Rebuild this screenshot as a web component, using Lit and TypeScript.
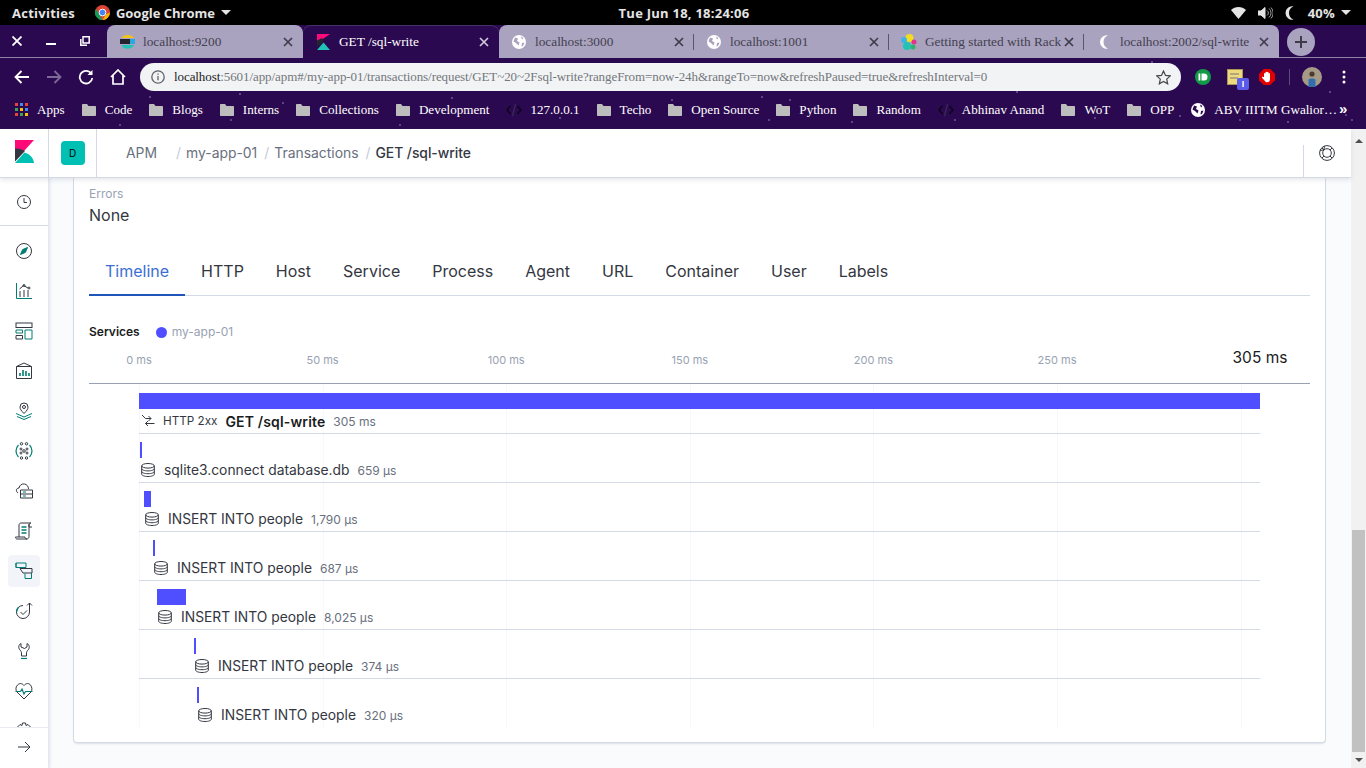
import { LitElement, html, css, svg } from "lit";
import { customElement } from "lit/decorators.js";

const D = "#343741";
const T = "#017d73";

const navIcon = (body: unknown) =>
  html`<svg class="nav-svg" viewBox="0 0 18 18" width="18" height="18" fill="none" stroke="${D}" stroke-width="1">${body}</svg>`;

const navItems = [
  svg`<circle cx="9" cy="9" r="6.5"/><path d="M9 5v4.5h3"/>`,
  svg`<circle cx="9" cy="9" r="7.5"/><path d="M12.5 5.5L10.4 10.4 5.5 12.5 7.6 7.6z" fill="${T}" stroke="${T}"/>`,
  svg`<path d="M1.5 1v15.5h15.5" stroke="${T}"/><path d="M5 15V9M9 15V8M13 15V8M4.5 7L8.5 3.5 13 6" /><circle cx="9" cy="3.5" r="1"/><circle cx="14" cy="6" r="1"/>`,
  svg`<rect x="1" y="1" width="16" height="4.5"/><path d="M1 13.5h6.5V17H1z"/><path d="M10 8h7v9h-7z" stroke="${T}"/><path d="M1 8h6.5v3H1z" stroke="${T}"/>`,
  svg`<path d="M1.5 4.5h15v12h-15zM1.5 4.5L9 1l7.5 3.5"/><path d="M5 14v-3M8 14V8M11 14v-5M14 14v-3" stroke="${T}" stroke-width="1.6"/>`,
  svg`<path d="M9 11.5C6 8.5 5 7 5 5a4 4 0 0 1 8 0c0 2-1 3.5-4 6.5z"/><circle cx="9" cy="5" r="1.5"/><path d="M1 11.5l8 3.5 8-3.5M2 14.5l7 3 7-3" stroke="${T}"/>`,
  svg`<circle cx="6.5" cy="1.8" r="1.2"/><circle cx="11.5" cy="1.8" r="1.2"/><circle cx="9" cy="9" r="1.3"/><circle cx="6.5" cy="16" r="1.2"/><circle cx="11.5" cy="16" r="1.2"/><circle cx="6" cy="7" r="1"/><circle cx="12" cy="7" r="1"/><circle cx="6" cy="11" r="1"/><circle cx="12" cy="11" r="1"/><path d="M3.5 3C1.5 5 1 7 1 9s.5 4 2.5 6M14.5 3C16.5 5 17 7 17 9s-.5 4-2.5 6" stroke="${T}" stroke-width="1.2"/>`,
  svg`<path d="M3 11C.5 9.5 1 6 4 6c.5-3 3-4.500 5.500-4s4 2.500 4 5"/><path d="M5.500 8h12v8h-12zM5.500 12h12"/><path d="M8 10h3M8 14h3" stroke="${T}"/>`,
  svg`<path d="M4 15V3c0-1 1-2 2-2h10c-1 0-2 1-2 2v11.500c0 1.500-1 2.500-2 2.500H2c-1 0-1.500-1-1.500-2H10c0 1 .5 2 2 2"/><path d="M6.500 5h5M6.500 8h5M6.500 11h5" stroke="${T}" stroke-width="1.3"/><path d="M14 2v3h3"/>`,
  svg`<path d="M1 1h10v4.500H1z" fill="none" stroke="${T}"/><path d="M5 6.500h12v4.500H8z" stroke="${D}"/><path d="M10 11.500v5h6.500V11" stroke="${T}"/><path d="M1 1v4.500" stroke="${T}"/>`,
  svg`<path d="M8 3.500A6.500 6.500 0 1 0 14.500 10V1M12 3.500L14.500 1 17 3.500"/><path d="M5.500 10l2.500 2.500 4-4"/><path d="M1.500 10a6.500 6.500 0 0 1 2-4.700" stroke="${T}" stroke-width="1.300"/>`,
  svg`<path d="M6 1.500C3.500 2.500 3 6 5 8c1 1 1.500 2 1.500 3v3h5v-3c0-1 .5-2 1.500-3 2-2 1.500-5.500-1-6.500V5L9.500 6.500 6 5z"/><path d="M6 16.500h6" stroke="${T}" stroke-width="1.200"/>`,
  svg`<path d="M2 10C.5 8 .5 5 2.500 3S7 1 9 3.500C11 1 14 1 15.500 3s2 5 .5 7L9 17z"/><path d="M.5 9.500h5l1.500-2.500 2 5 1.500-2.500h7" stroke="${T}" stroke-width="1.200"/>`,
  svg`<circle cx="9" cy="9" r="2.500"/><path d="M7.500 1h3l.5 2.500 2-1 2.500 2.500-1 2 2.500.5v3l-2.500.5 1 2-2.500 2.500-2-1-.5 2.500h-3l-.5-2.500-2 1L2.500 13l1-2L1 10.500v-3l2.500-.5-1-2L5 2.500l2 1z"/>`,
];

const kibanaLogo = html`<svg width="19" height="23" viewBox="0 0 19 23"><path d="M0 0h19L0 21z" fill="#ff0a78"/><path d="M0 23l9.500-10.500C15 14 18.500 18 19 23z" fill="#00bfb3"/><path d="M0 8.500v13L10 11C7 9 3.500 8.300 0 8.500z" fill="#343741"/></svg>`;

const folder = html`<svg width="14" height="12" viewBox="0 0 14 12"><path d="M0 1c0-.6.4-1 1-1h4l1.500 2H13c.6 0 1 .4 1 1v8c0 .6-.4 1-1 1H1c-.6 0-1-.4-1-1z" fill="#bdbdbd"/></svg>`;
const code = html`<svg width="16" height="12" viewBox="0 0 16 12" fill="none" stroke="#0d0419" stroke-width="1.500"><path d="M4.500 2L1 6l3.500 4M11.500 2L15 6l-3.500 4"/><path d="M9.500 0L6.500 12" stroke="#3a2558"/></svg>`;
const globe = (size: number, fg: string, bg: string) => html`<svg width="${size}" height="${size}" viewBox="0 0 14 14"><circle cx="7" cy="7" r="7" fill="${fg}"/><path d="M3 2.500l3 1-1 2.500 2.500 1.500-1 3L4 8 1.500 6.500zM9 1.500l2.500 1.500-1.500 1.500zM10 8l2.500-.500-1.500 3.500-1.500.5z" fill="${bg}"/></svg>`;
const close = (c: string) => html`<svg class="tab-x" width="10" height="10" viewBox="0 0 10 10" stroke="${c}" stroke-width="1.700"><path d="M1 1l8 8M9 1l-8 8"/></svg>`;

const crescent = "M8.500 .5A6.640 6.640 0 1 0 8.500 13.500 6.940 6.940 0 0 1 8.500 .5z";

const elasticIcon = html`<svg width="15" height="16" viewBox="0 0 15 16"><path d="M1.500 4C3 0 12 0 14 4z" fill="#f0c419"/><rect x="0" y="5" width="10" height="5" fill="#24242c"/><rect x="10" y="5" width="5" height="5" fill="#27a9e1"/><path d="M1.500 11h12.500C12 16 3 16 1.500 11z" fill="#1fc4b5"/></svg>`;
const kibanaTab = html`<svg width="13" height="16" viewBox="0 0 13 16"><path d="M0 0h13L0 9z" fill="#ff0a78"/><path d="M0 6.500L5 4 6.500 7.500 0 13z" fill="#24242c"/><path d="M0 16l6.500-7.500L13 16z" fill="#1fc4b5"/></svg>`;
const rancherIcon = html`<svg width="16" height="16" viewBox="0 0 16 16"><circle cx="8.500" cy="4" r="4" fill="#f4dc20"/><circle cx="3" cy="6" r="3" fill="#3ab4e8"/><circle cx="13" cy="8" r="2.500" fill="#e0358b"/><circle cx="6" cy="12" r="4" fill="#1fc4b5"/><circle cx="12" cy="13" r="2.500" fill="#2fb56a"/></svg>`;
const moonTab = html`<svg width="10" height="14" viewBox="0 0 9 14"><path d="${crescent}" fill="#fff"/></svg>`;

const tabs = [
  { t: "localhost:9200", i: elasticIcon, w: 196 },
  { t: "GET /sql-write", i: kibanaTab, w: 196, active: true },
  { t: "localhost:3000", i: globe(14, "#fff", "#a8a2bd"), w: 195 },
  { t: "localhost:1001", i: globe(14, "#fff", "#a8a2bd"), w: 195 },
  { t: "Getting started with Rack", i: rancherIcon, w: 195 },
  { t: "localhost:2002/sql-write", i: moonTab, w: 195 },
];

const bookmarks = [
  ["folder", "Code"], ["folder", "Blogs"], ["folder", "Interns"], ["folder", "Collections"],
  ["folder", "Development"], ["code", "127.0.0.1"], ["folder", "Techo"], ["folder", "Open Source"],
  ["folder", "Python"], ["folder", "Random"], ["code", "Abhinav Anand"], ["folder", "WoT"],
  ["folder", "OPP"], ["globe", "ABV IIITM Gwalior\u2026"],
];

const stars = [
  [150, 97], [283, 103], [231, 120], [452, 98], [498, 55], [492, 36], [350, 113], [560, 118],
  [583, 32], [762, 97], [790, 100], [769, 120], [852, 122], [1017, 92], [1016, 44], [955, 120],
  [1180, 116], [1288, 122], [1346, 115], [1352, 120], [1152, 62], [672, 100], [640, 115], [1095, 118],
  [1040, 113], [1240, 120], [400, 125], [120, 125], [240, 94], [1330, 92],
];

const ticks = [
  ["0 ms", 0], ["50 ms", 50], ["100 ms", 100], ["150 ms", 150], ["200 ms", 200], ["250 ms", 250],
] as [string, number][];

const rows = [
  { name: "sqlite3.connect database.db", d: "659 \u00b5s", off: 1, w: 2, icon: 2 },
  { name: "INSERT INTO people", d: "1,790 \u00b5s", off: 5, w: 7, icon: 6 },
  { name: "INSERT INTO people", d: "687 \u00b5s", off: 14, w: 2, icon: 15 },
  { name: "INSERT INTO people", d: "8,025 \u00b5s", off: 18, w: 29, icon: 19 },
  { name: "INSERT INTO people", d: "374 \u00b5s", off: 55, w: 2, icon: 56 },
  { name: "INSERT INTO people", d: "320 \u00b5s", off: 58, w: 2, icon: 59 },
];

const dbIcon = html`<svg class="db" width="14" height="14" viewBox="0 0 14 14" fill="none" stroke="#343741" stroke-width="1"><ellipse cx="7" cy="2.800" rx="6.300" ry="2.300"/><path d="M.7 2.800v8.400c0 1.300 2.800 2.300 6.300 2.300s6.300-1 6.300-2.300V2.800"/><path d="M.7 5.600c0 1.300 2.800 2.300 6.300 2.300s6.300-1 6.300-2.300M.7 8.400c0 1.300 2.800 2.300 6.300 2.300s6.300-1 6.300-2.300"/></svg>`;
const httpIcon = html`<svg width="14" height="14" viewBox="0 0 14 14" fill="none" stroke="#343741" stroke-width="1"><path d="M1 1l3.500 3.500H10M7.500 2L10 4.500 7.500 7"/><path d="M13.500 9.500H4.500M7 7L4.500 9.500 7 12"/></svg>`;

@customElement("app-root")
export class AppRoot extends LitElement {
  static styles = css`
    :host { display: block; width: 1366px; height: 768px; overflow: hidden; font-family: "Inter", "Liberation Sans", sans-serif; }
    .root { width: 1366px; height: 768px; display: flex; flex-direction: column; overflow: hidden; }

    .gnome { height: 25px; flex: none; background: #000; color: #e4e4e4; display: grid; grid-template-columns: 1fr auto 1fr; align-items: center; font: 700 13px "Open Sans", "Noto Sans", sans-serif; letter-spacing: .25px; }
    .g-left { display: flex; align-items: center; padding-left: 12px; }
    .g-chrome { display: flex; align-items: center; gap: 6px; margin-left: 20px; letter-spacing: 0; }
    .caret { width: 0; height: 0; border-left: 5px solid transparent; border-right: 5px solid transparent; border-top: 5px solid #e4e4e4; margin-left: 6px; }
    .g-center { margin-left: 2px; }
    .g-right { display: flex; align-items: center; justify-content: flex-end; padding-right: 15px; }
    .g-right svg { display: block; }

    .chrome { position: relative; height: 104px; flex: none; background: #2b0950; display: flex; flex-direction: column; color: #fff; overflow: hidden; }
    .stars { position: absolute; left: 0; top: -25px; }
    .tabstrip { position: relative; height: 33px; flex: none; display: flex; border-bottom: 1px solid #8d84a8; box-sizing: border-box; }
    .win { width: 107px; flex: none; display: flex; align-items: center; padding: 0 0 0 12px; box-sizing: border-box; gap: 24px; }
    .tab { height: 33px; box-sizing: border-box; display: flex; align-items: center; flex: none; padding: 0 10px 0 12px; background: #a9a3bf; color: #43404f; font: 14px "Liberation Serif", serif; position: relative; }
    .tab.first { border-radius: 8px 8px 0 0; }
    .tab.active { background: #2b0950; color: #fff; border-radius: 8px 8px 0 0; box-shadow: inset 0 1px 0 #453068; }
    .tab.g3 { border-radius: 8px 0 0 0; }
    .tab.g6 { border-radius: 0 8px 0 0; }
    .tab.sep::after { content: ""; position: absolute; right: 0; top: 9px; height: 16px; width: 1px; background: #5a5568; }
    .tab-icon { width: 16px; display: flex; justify-content: center; flex: none; }
    .tab-title { flex: 1; margin-left: 8px; overflow: hidden; white-space: nowrap; min-width: 0; font-size: 13.3px; }
    .tab-x { flex: none; margin-left: 3px; }
    .plus { width: 28px; height: 28px; border-radius: 50%; background: #a9a3bf; margin: 3px 0 0 8px; display: flex; align-items: center; justify-content: center; flex: none; }

    .toolbar { position: relative; height: 34px; flex: none; display: flex; align-items: center; }
    .nav-btns { width: 140px; flex: none; display: flex; align-items: center; padding: 3px 0 0 14px; box-sizing: border-box; gap: 16px; }
    .omni { width: 1041px; height: 28px; flex: none; background: #f1f3f4; border-radius: 14px; display: flex; align-items: center; padding: 0 10px 0 11px; box-sizing: border-box; margin-top: 4px; }
    .url { flex: 1; margin-left: 9px; font: 13px "Liberation Serif", serif; color: #73777c; white-space: nowrap; overflow: hidden; letter-spacing: -.08px; }
    .url b { font-weight: 400; color: #202124; }
    .ext { flex: 1; display: flex; align-items: center; padding: 3px 0 0 14px; }
    .divider { width: 1px; height: 16px; background: #5d4a78; margin: 0 12px 0 14px; }
    .note { margin: 6px 9px 0 0; }

    .marks { position: relative; height: 37px; flex: none; box-sizing: border-box; padding: 0 0 2px 15px; display: flex; align-items: center; gap: 17px; font: 13.1px "Liberation Serif", serif; color: #fff; white-space: nowrap; }
    .mark { display: flex; align-items: center; gap: 9px; flex: none; }
    .mark.code { gap: 8px; }
    .more { position: absolute; left: 1339px; top: 8px; font: 700 15px "Liberation Sans", sans-serif; }

    .page { flex: 1; display: flex; min-height: 0; }
    .app { flex: 1; min-width: 0; display: flex; flex-direction: column; background: #fafbfd; }
    .scroll { width: 15px; flex: none; background: #f1f1f1; display: flex; flex-direction: column; align-items: center; }
    .up { width: 0; height: 0; border-left: 4px solid transparent; border-right: 4px solid transparent; border-bottom: 4px solid #505050; margin-top: 10px; }
    .thumb { width: 13px; height: 222px; background: #c1c1c1; margin-top: 387px; }
    .down { width: 0; height: 0; border-left: 4px solid transparent; border-right: 4px solid transparent; border-top: 4px solid #505050; margin-top: 6px; }

    .kbn-header { height: 49px; flex: none; box-sizing: border-box; background: #fff; border-bottom: 1px solid #d3dae6; box-shadow: 0 2px 4px rgba(152,162,179,.25); display: flex; align-items: center; position: relative; z-index: 2; color: #69707d; font-size: 13.9px; }
    .logo { width: 49px; height: 100%; box-sizing: border-box; border-right: 1px solid #d3dae6; flex: none; display: flex; padding: 11px 0 0 15px; }
    .space { width: 48px; height: 100%; box-sizing: border-box; border-right: 1px solid #d3dae6; flex: none; display: flex; align-items: center; justify-content: center; }
    .badge { width: 24px; height: 24px; border-radius: 4px; background: #00bfb3; color: #000; font-size: 10px; display: flex; align-items: center; justify-content: center; margin-top: -1px; }
    .crumbs { display: flex; align-items: center; margin: -1px 0 0 29px; flex: 1; }
    .crumb-sep { color: #c4cbd6; margin: 0 6px 0 0; width: 4px; }
    .crumbs span.first { margin-right: 19px; }
    .crumbs span.c { margin-right: 7px; }
    .crumbs .cur { color: #343741; font-weight: 500; letter-spacing: -.05px; }
    .help { width: 48px; height: 32px; box-sizing: border-box; border-left: 1px solid #d3dae6; flex: none; align-self: flex-start; margin-top: 16px; display: flex; align-items: flex-start; justify-content: center; padding-right: 1px; }

    .body { flex: 1; display: flex; min-height: 0; }
    .nav { width: 49px; box-sizing: border-box; flex: none; background: #fff; border-right: 1px solid #e3e7ef; box-shadow: 1px 0 3px rgba(152,162,179,.25); display: flex; flex-direction: column; overflow: hidden; position: relative; z-index: 1; }
    .recent { height: 48px; flex: none; box-sizing: border-box; border-bottom: 1px solid #d3dae6; display: flex; align-items: center; justify-content: center; }
    .nav-list { flex: 1; min-height: 0; overflow: hidden; padding: 9px 8px 0; display: flex; flex-direction: column; gap: 8px; }
    .nav-item { width: 32px; height: 32px; flex: none; border-radius: 4px; display: flex; align-items: center; justify-content: center; }
    .nav-item.on { background: #f2f4f9; }
    .nav-svg { display: block; }
    .collapse { height: 41px; flex: none; box-sizing: border-box; background: #fff; border-top: 1px solid #e8ebf2; display: flex; align-items: center; justify-content: center; padding-bottom: 2px; }

    .main { flex: 1; min-width: 0; padding: 0 25px 25px 24px; display: flex; }
    .card { flex: 1; min-width: 0; box-sizing: border-box; background: #fff; border: 1px solid #d3dae6; border-top: none; border-radius: 0 0 4px 4px; box-shadow: 0 2px 2px -1px rgba(152,162,179,.3); padding: 8px 15px 15px 15px; display: flex; flex-direction: column; }
    .lab { font-size: 12px; line-height: 16px; color: #98a2b3; }
    .val { font-size: 16px; line-height: 24px; color: #343741; margin-top: 1px; }
    .tabs { display: flex; height: 48px; margin-top: 21px; box-sizing: border-box; border-bottom: 1px solid #d3dae6; flex: none; }
    .tb { padding: 0 16px; display: flex; align-items: center; height: 48px; box-sizing: border-box; font-size: 16px; color: #343741; border-bottom: 2px solid transparent; }
    .tb.on { color: #3b6fd4; border-bottom-color: #1f54b8; }
    .svc { display: flex; align-items: center; font-size: 12px; line-height: 16px; margin-top: 28px; flex: none; color: #98a2b3; }
    .svc b { color: #1a1c21; font-weight: 600; margin-right: 16px; }
    .dot { width: 11px; height: 11px; border-radius: 50%; background: #4f4fff; margin-right: 5px; }
    .axis { position: relative; height: 44px; box-sizing: border-box; flex: none; border-bottom: 1px solid #98a2b3; }
    .tick { position: absolute; top: 13px; transform: translateX(-50%); font-size: 11px; line-height: 14px; color: #98a2b3; white-space: nowrap; }
    .tick.end { top: 9px; font-size: 15.5px; line-height: 18px; color: #1a1c21; }
    .rows { margin: 1px 50px 0 50px; flex: none; background: repeating-linear-gradient(to right, #f7f8fb 0 1px, transparent 1px 183.6px); }
    .row { height: 49px; box-sizing: border-box; padding-top: 8px; border-bottom: 1px solid #d3dae6; }
    .row:last-child { border-bottom: none; }
    .bar { height: 16px; background: #4f4fff; }
    .lbl { display: flex; align-items: center; height: 20px; margin-top: 2px; white-space: nowrap; font-size: 13.85px; color: #343741; }
    .db { flex: none; margin-right: 9px; }
    .h-status { font-size: 11.7px; margin: 0 8px 0 8px; }
    .h-name { font-weight: 600; font-size: 14px; color: #1a1c21; letter-spacing: .15px; }
    .dur { font-size: 12px; color: #69707d; margin-left: 8px; }
  `;

  render() {
    return html`<div class="root">
      <div class="gnome">
        <div class="g-left">
          <span>Activities</span>
          <span class="g-chrome">
            <svg width="15" height="15" viewBox="0 0 16 16"><circle cx="8" cy="8" r="8" fill="#db4437"/><path d="M8 16A8 8 0 0 1 1 4l3.500 6L8 16z" fill="#0f9d58"/><path d="M8 16l3.700-6.200L16 8a8 8 0 0 1-8 8z" fill="#f4b400"/><circle cx="8" cy="8" r="3.600" fill="#4285f4" stroke="#fff" stroke-width="1"/></svg>
            <span>Google Chrome</span>
          </span>
          <span class="caret"></span>
        </div>
        <div class="g-center">Tue Jun 18, 18:24:06</div>
        <div class="g-right">
          <svg width="15" height="12" viewBox="0 0 15 12" style="margin-right:12px"><path d="M0 3C4-1 11-1 15 3L7.500 12z" fill="#e4e4e4"/></svg>
          <svg width="15" height="12" viewBox="0 0 15 12" fill="none" stroke="#e4e4e4" style="margin-right:12px"><path d="M0 4h3l4-3.500v11L3 8H0z" fill="#e4e4e4"/><path d="M9 3.500a3 3 0 0 1 0 5M11 1.500a6 6 0 0 1 0 9M13 .5a8 8 0 0 1 0 11" stroke-opacity=".7"/></svg>
          <svg width="9" height="14" viewBox="0 0 9 14" style="margin-right:14px"><path d="${crescent}" fill="#e4e4e4"/></svg>
          <span>40%</span>
          <span class="caret"></span>
        </div>
      </div>

      <div class="chrome">
        <svg class="stars" width="1366" height="129" aria-hidden="true">
          ${stars.map(([x, y]) => svg`<circle cx="${x}" cy="${y}" r=".8" fill="#9d8fc8"/>`)}
        </svg>
        <div class="tabstrip">
          <div class="win">
            <svg width="10" height="10" viewBox="0 0 10 10" stroke="#fff" stroke-width="1.800"><path d="M.5.5l9 9M9.500.5l-9 9"/></svg>
            <svg width="10" height="10" viewBox="0 0 10 10" fill="#fff"><rect y="7" width="10" height="2"/></svg>
            <svg width="10" height="10" viewBox="0 0 10 10" fill="none" stroke="#fff" stroke-width="1.500"><path d="M3 .8h6.200V7H3z"/><path d="M.8 3v6.200H7" /></svg>
          </div>
          ${tabs.map((t, i) => html`
            <div class="tab ${t.active ? "active" : ""} ${i === 0 ? "first" : ""} ${i === 2 ? "g3" : ""} ${i === 5 ? "g6" : ""} ${i >= 2 && i < 5 ? "sep" : ""}" style="width:${t.w}px">
              <span class="tab-icon">${t.i}</span>
              <span class="tab-title">${t.t}</span>
              ${close(t.active ? "#cfc9de" : "#3f3c4a")}
            </div>`)}
          <div class="plus"><svg width="14" height="14" viewBox="0 0 14 14" stroke="#3f3c4a" stroke-width="2"><path d="M7 1v12M1 7h12"/></svg></div>
        </div>

        <div class="toolbar">
          <div class="nav-btns">
            <svg width="16" height="14" viewBox="0 0 16 14" fill="none" stroke="#fff" stroke-width="1.800"><path d="M15 7H2M7.500 1L1.500 7l6 6"/></svg>
            <svg width="16" height="14" viewBox="0 0 16 14" fill="none" stroke="#7d6a98" stroke-width="1.800"><path d="M1 7h13M8.500 1l6 6-6 6"/></svg>
            <svg width="16" height="16" viewBox="0 0 16 16" fill="none" stroke="#fff" stroke-width="1.800"><path d="M13.500 5A6.300 6.300 0 1 0 14.300 9"/><path d="M14.500 1v5h-5" fill="#fff" stroke="none"/></svg>
            <svg width="16" height="16" viewBox="0 0 16 16" fill="none" stroke="#fff" stroke-width="1.700"><path d="M1 8l7-7 7 7M3 6.500V15h10V6.500"/></svg>
          </div>
          <div class="omni">
            <svg width="14" height="14" viewBox="0 0 14 14" fill="none" stroke="#5f6368" stroke-width="1.300"><circle cx="7" cy="7" r="6.200"/><path d="M7 6v4.200M7 3.500v1.300"/></svg>
            <span class="url"><b>localhost</b>:5601/app/apm#/my-app-01/transactions/request/GET~20~2Fsql-write?rangeFrom=now-24h&amp;rangeTo=now&amp;refreshPaused=true&amp;refreshInterval=0</span>
            <svg width="15" height="15" viewBox="0 0 15 15" fill="none" stroke="#45474b" stroke-width="1.200"><path d="M7.500 1l2 4.400 4.800.5-3.600 3.200 1 4.700-4.200-2.400-4.200 2.400 1-4.700L.7 5.900l4.800-.5z"/></svg>
          </div>
          <div class="ext">
            <svg width="16" height="16" viewBox="0 0 16 16" style="margin-right:16px"><circle cx="8" cy="8" r="8" fill="#129a46"/><rect x="3.500" y="4.500" width="1.800" height="7" fill="#fff"/><path d="M6.500 4.500h2.500a3.500 3.500 0 0 1 0 7H6.500z" fill="#fff"/></svg>
            <svg class="note" width="23" height="22" viewBox="0 0 23 22"><rect x=".5" y=".5" width="15" height="15" fill="#efd97f" stroke="#a89752"/><path d="M3 5h9M3 9h8" stroke="#777" stroke-width="1"/><rect x="10" y="9" width="12" height="12" rx="2" fill="#5a5ce8"/><rect x="15.400" y="12" width="1.400" height="6" fill="#fff"/></svg>
            <svg width="16" height="16" viewBox="0 0 16 16"><path d="M4.700 0h6.600L16 4.700v6.600L11.300 16H4.700L0 11.300V4.700z" fill="#e00000"/><path d="M5 8V4.500a.8.800 0 0 1 1.500 0V3.200a.8.800 0 0 1 1.500 0 .8.800 0 0 1 1.500 0v1.300a.8.800 0 0 1 1.500 0V10c0 2-1 3.300-2.800 3.300-1.300 0-2.100-.6-2.700-1.800L3 8.800c-.4-.8.700-1.400 1.200-.7z" fill="#fff"/></svg>
            <span class="divider"></span>
            <svg width="20" height="20" viewBox="0 0 20 20" style="margin-right:20px"><circle cx="10" cy="10" r="10" fill="#a49a86"/><circle cx="10" cy="7" r="2.600" fill="#4e3b30"/><path d="M6.500 20v-7c0-2 7-2 7 0v7z" fill="#2f6fb0"/></svg>
            <svg width="4" height="14" viewBox="0 0 4 14" fill="#fff"><circle cx="2" cy="2" r="1.500"/><circle cx="2" cy="7" r="1.500"/><circle cx="2" cy="12" r="1.500"/></svg>
          </div>
        </div>

        <div class="marks">
          <div class="mark">
            <svg width="13" height="13" viewBox="0 0 13 13"><rect width="3" height="3" fill="#ea4335"/><rect x="5" width="3" height="3" fill="#4285f4"/><rect x="10" width="3" height="3" fill="#ea4335"/><rect y="5" width="3" height="3" fill="#34a853"/><rect x="5" y="5" width="3" height="3" fill="#fbbc05"/><rect x="10" y="5" width="3" height="3" fill="#4285f4"/><rect y="10" width="3" height="3" fill="#ea4335"/><rect x="5" y="10" width="3" height="3" fill="#34a853"/><rect x="10" y="10" width="3" height="3" fill="#fbbc05"/></svg>
            <span>Apps</span>
          </div>
          ${bookmarks.map(([k, t]) => html`<div class="mark ${k === "code" ? "code" : ""}">
            ${k === "folder" ? folder : k === "code" ? code : globe(14, "#fff", "#2b0950")}
            <span>${t}</span>
          </div>`)}
          <span class="more">»</span>
        </div>
      </div>

      <div class="page">
        <div class="app">
          <div class="kbn-header">
            <div class="logo">${kibanaLogo}</div>
            <div class="space"><span class="badge">D</span></div>
            <div class="crumbs">
              <span class="first">APM</span>
              <span class="crumb-sep">/</span><span class="c">my-app-01</span>
              <span class="crumb-sep">/</span><span class="c">Transactions</span>
              <span class="crumb-sep">/</span><span class="cur">GET /sql-write</span>
            </div>
            <div class="help">
              <svg width="16" height="16" viewBox="0 0 16 16" fill="none" stroke="#343741" stroke-width="1"><circle cx="8" cy="8" r="7.400"/><circle cx="8" cy="8" r="4.300"/><path d="M3 3l2 2M13 3l-2 2M3 13l2-2M13 13l-2-2M5.500 1.200l-.5 3M1.200 5.500l3-.5"/></svg>
            </div>
          </div>
          <div class="body">
            <div class="nav">
              <div class="recent">${navIcon(navItems[0])}</div>
              <div class="nav-list">
                ${navItems.slice(1).map((n, i) => html`<div class="nav-item ${i === 8 ? "on" : ""}">${navIcon(n)}</div>`)}
              </div>
              <div class="collapse">
                <svg width="14" height="12" viewBox="0 0 14 12" fill="none" stroke="#343741" stroke-width="1"><path d="M1 6h12M8 1l5 5-5 5"/></svg>
              </div>
            </div>
            <div class="main">
              <div class="card">
                <div class="lab">Errors</div>
                <div class="val">None</div>
                <div class="tabs">
                  ${["Timeline", "HTTP", "Host", "Service", "Process", "Agent", "URL", "Container", "User", "Labels"].map((t, i) => html`<div class="tb ${i === 0 ? "on" : ""}">${t}</div>`)}
                </div>
                <div class="svc"><b>Services</b><span class="dot"></span><span>my-app-01</span></div>
                <div class="axis">
                  ${ticks.map(([t, v]) => html`<span class="tick" style="left:${50 + v * 3.672}px">${t}</span>`)}
                  <span class="tick end" style="left:1171px">305 ms</span>
                </div>
                <div class="rows">
                  <div class="row">
                    <div class="bar"></div>
                    <div class="lbl" style="padding-left:2px">${httpIcon}<span class="h-status">HTTP 2xx</span><span class="h-name">GET /sql-write</span><span class="dur">305 ms</span></div>
                  </div>
                  ${rows.map((r) => html`<div class="row">
                    <div class="bar" style="margin-left:${r.off}px;width:${r.w}px"></div>
                    <div class="lbl" style="padding-left:${r.icon}px">${dbIcon}<span>${r.name}</span><span class="dur">${r.d}</span></div>
                  </div>`)}
                </div>
              </div>
            </div>
          </div>
        </div>
        <div class="scroll"><span class="up"></span><span class="thumb"></span><span class="down"></span></div>
      </div>
    </div>`;
  }
}
